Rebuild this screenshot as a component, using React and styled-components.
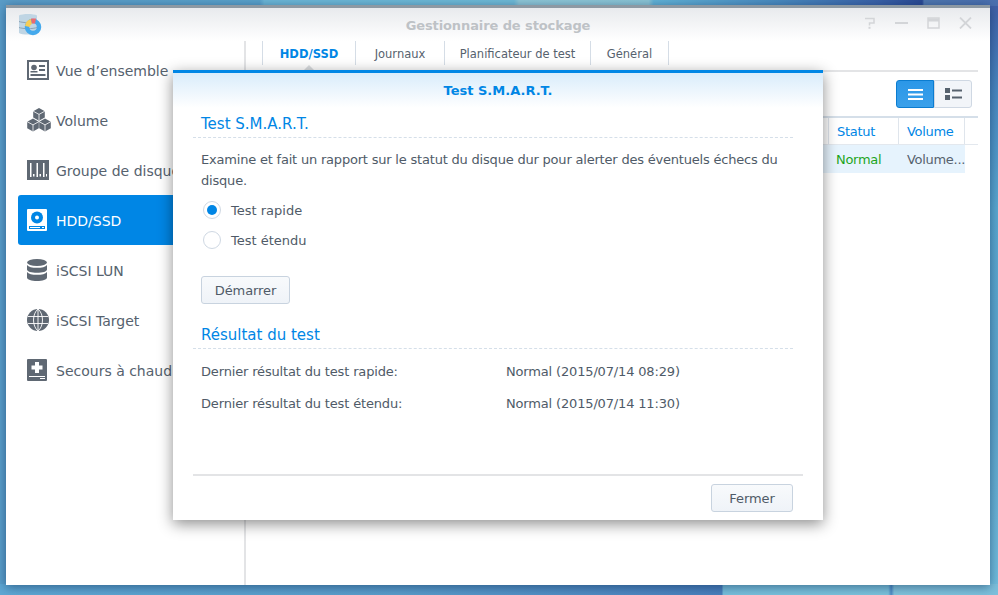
import styled, { createGlobalStyle } from 'styled-components'

const GlobalStyle = createGlobalStyle`
    html, body {
        margin: 0;
        padding: 0;
        overflow: hidden;
    }
    * {
        box-sizing: border-box;
    }
`

const navItems = [
    { label: 'Vue d’ensemble', icon: 'overview' },
    { label: 'Volume', icon: 'volume' },
    { label: 'Groupe de disques', icon: 'group' },
    { label: 'HDD/SSD', icon: 'hdd', active: true },
    { label: 'iSCSI LUN', icon: 'lun' },
    { label: 'iSCSI Target', icon: 'target' },
    { label: 'Secours à chaud', icon: 'spare' },
]

const tabs = [
    { label: 'HDD/SSD', width: 94, active: true },
    { label: 'Journaux', width: 89 },
    { label: 'Planificateur de test', width: 146 },
    { label: 'Général', width: 78 },
]

const NavIcon = ({ name, active }) => {
    const c = active ? '#ffffff' : '#5f6873'
    if (name === 'overview') return (
        <svg width="22" height="20" viewBox="0 0 22 20">
            <rect x="1" y="1" width="20" height="18" fill="#fff" stroke={c} strokeWidth="2" />
            <circle cx="7" cy="7.500" r="2.800" fill={c} />
            <path d="M3.500 12.500h7v-1.500h-7z" fill={c} />
            <path d="M12 5h6v2h-6zM12 9h6v2h-6zM3.500 14h15v2h-15z" fill={c} />
        </svg>
    )
    if (name === 'volume') return (
        <svg width="24" height="24" viewBox="0 0 24 24">
            <path d="M12 0l5.800 3.200v6.300L12 12.700 6.200 9.500V3.200z" fill={c} />
            <path d="M6 10.500l5.800 3.200v6.600L6 23.500.2 20.300v-6.600z" fill={c} />
            <path d="M18 10.500l5.800 3.200v6.600L18 23.500l-5.800-3.200v-6.600z" fill={c} />
            <path d="M6.200 3.200L12 6.400l5.800-3.200M12 6.400v6M.2 13.700L6 16.900l5.800-3.200M6 16.900v6.500M12.200 13.700l5.800 3.200 5.800-3.200M18 16.900v6.500" fill="none" stroke="#fff" strokeWidth=".8" />
        </svg>
    )
    if (name === 'group') return (
        <svg width="22" height="20" viewBox="0 0 22 20">
            <rect width="22" height="20" fill={c} />
            <path d="M3 3h1.500v14H3zM9.500 3H11v14H9.500zM16 3h1.500v14H16z" fill="#fff" />
            <path d="M6 14h1.500v2.500H6zM12.500 14H14v2.500h-1.500zM19 14h1v2.500h-1z" fill="#fff" />
        </svg>
    )
    if (name === 'hdd') return (
        <svg width="20" height="22" viewBox="0 0 20 22">
            <rect width="20" height="22" rx="1" fill="#fff" />
            <circle cx="10" cy="8.500" r="6" fill="#0086e5" />
            <circle cx="10" cy="8.500" r="2" fill="#fff" />
            <path d="M2 17h16v3H2z" fill="#0086e5" />
            <path d="M3 18h10v1H3zM15 18h2v1h-2z" fill="#fff" />
        </svg>
    )
    if (name === 'lun') return (
        <svg width="20" height="22" viewBox="0 0 20 22">
            <ellipse cx="10" cy="3.500" rx="10" ry="3.500" fill={c} />
            <path d="M0 6c1.500 2 5 2.800 10 2.800S18.500 8 20 6v4.500c0 2-4.500 3.300-10 3.300S0 12.500 0 10.500z" fill={c} />
            <path d="M0 13c1.500 2 5 2.800 10 2.800S18.500 15 20 13v5.500c0 2-4.500 3.500-10 3.500S0 20.500 0 18.500z" fill={c} />
        </svg>
    )
    if (name === 'target') return (
        <svg width="22" height="22" viewBox="0 0 22 22">
            <circle cx="11" cy="11" r="11" fill={c} />
            <path d="M1 7.500h20M1 14.500h20M11 0v22M11 0C5 5 5 17 11 22M11 0c6 5 6 17 0 22" fill="none" stroke="#fff" strokeWidth=".9" />
        </svg>
    )
    return (
        <svg width="20" height="22" viewBox="0 0 20 22">
            <rect width="20" height="22" rx="1" fill={c} />
            <path d="M8 3h4v3.500h3.500v4H12V14H8v-3.500H4.500v-4H8z" fill="#fff" />
            <path d="M2 17h16v1H2zM13 19h5v1h-5z" fill="#fff" />
        </svg>
    )
}

const App = () => {
    return (
        <Desktop>
            <GlobalStyle />
            <Window>
                <TitleBar>
                    <AppLogo>
                        <svg width="24" height="23" viewBox="0 0 24 23">
                            <path d="M0 1.500C3 -.5 15 -.5 18 1.500V19c-3 2-15 2-18 0z" fill="#bfd5e4" />
                            <path d="M0 7.500c4 1.500 14 1.500 18 0M0 13.500c4 1.500 14 1.500 18 0" fill="none" stroke="#8ea3b3" strokeWidth="1" />
                            <circle cx="14" cy="13" r="6" fill="none" stroke="#45a9ec" strokeWidth="4.500" />
                            <path d="M6 12a8 8 0 0 1 6-7l1 5a3 3 0 0 0-2 3z" fill="#f7cd55" />
                            <path d="M12 4.500h5l-1 5h-3z" fill="#ee6a70" />
                        </svg>
                    </AppLogo>
                    <WindowTitle>Gestionnaire de stockage</WindowTitle>
                    <WindowControls>
                        <svg width="12" height="12" viewBox="0 0 12 12">
                            <path d="M1 1.500h9v4.500H5.500v2.500" fill="none" stroke="#d3d5d8" strokeWidth="1.500" />
                            <path d="M4.500 9.800h2v2h-2z" fill="#d3d5d8" />
                        </svg>
                        <svg width="13" height="12" viewBox="0 0 13 12">
                            <path d="M0 6h13" stroke="#d3d5d8" strokeWidth="2" />
                        </svg>
                        <svg width="13" height="12" viewBox="0 0 13 12">
                            <path d="M1 1h11v10H1z" fill="none" stroke="#d3d5d8" strokeWidth="1.500" />
                            <path d="M1 3h11" stroke="#d3d5d8" strokeWidth="3" />
                        </svg>
                        <svg width="13" height="12" viewBox="0 0 13 12">
                            <path d="M1 .5l11 11M12 .5l-11 11" stroke="#d3d5d8" strokeWidth="1.800" />
                        </svg>
                    </WindowControls>
                </TitleBar>
                <WindowBody>
                    <Sidebar>
                        {navItems.map((item) => (
                            <NavItem key={item.label} $active={item.active}>
                                <NavIconBox><NavIcon name={item.icon} active={item.active} /></NavIconBox>
                                <NavLabel>{item.label}</NavLabel>
                            </NavItem>
                        ))}
                    </Sidebar>
                    <Content>
                        <TabBar>
                            {tabs.map((tab) => (
                                <Tab key={tab.label} $active={tab.active} $width={tab.width}>{tab.label}</Tab>
                            ))}
                        </TabBar>
                        <Toolbar>
                            <Segment $active>
                                <svg width="15" height="11" viewBox="0 0 15 11">
                                    <path d="M0 0h15v2H0zM0 4.500h15v2H0zM0 9h15v2H0z" fill="#fff" />
                                </svg>
                            </Segment>
                            <Segment>
                                <svg width="17" height="12" viewBox="0 0 17 12">
                                    <path d="M0 0h5v5H0zM0 7h5v5H0zM7 1.500h10v2H7zM7 8.500h10v2H7z" fill="#56626e" />
                                </svg>
                            </Segment>
                        </Toolbar>
                        <Table>
                            <HeadRow>
                                <HeadCell $width={71}>Statut</HeadCell>
                                <HeadCell $width={67}>Volume</HeadCell>
                            </HeadRow>
                            <BodyRow>
                                <BodyCell $width={71} $green>Normal</BodyCell>
                                <BodyCell $width={67}>Volume...</BodyCell>
                            </BodyRow>
                        </Table>
                    </Content>
                </WindowBody>
            </Window>
            <Modal>
                <ModalHeader>Test S.M.A.R.T.</ModalHeader>
                <ModalBody>
                    <SectionTitle>Test S.M.A.R.T.</SectionTitle>
                    <Paragraph>Examine et fait un rapport sur le statut du disque dur pour alerter des éventuels échecs du disque.</Paragraph>
                    <RadioRow>
                        <Radio $checked />
                        <span>Test rapide</span>
                    </RadioRow>
                    <RadioRow>
                        <Radio />
                        <span>Test étendu</span>
                    </RadioRow>
                    <StartButton>Démarrer</StartButton>
                    <SectionTitle>Résultat du test</SectionTitle>
                    <ResultList>
                        <ResultRow>
                            <ResultLabel>Dernier résultat du test rapide:</ResultLabel>
                            <span>Normal (2015/07/14 08:29)</span>
                        </ResultRow>
                        <ResultRow>
                            <ResultLabel>Dernier résultat du test étendu:</ResultLabel>
                            <span>Normal (2015/07/14 11:30)</span>
                        </ResultRow>
                    </ResultList>
                </ModalBody>
                <ModalFooter>
                    <CloseButton>Fermer</CloseButton>
                </ModalFooter>
            </Modal>
        </Desktop>
    )
}

export default App

const Desktop = styled.div`
    position: relative;
    width: 998px;
    height: 595px;
    overflow: hidden;
    font-family: "DejaVu Sans", sans-serif;
    font-size: 13px;
    color: #4f5b68;
    background:
        linear-gradient(90deg, #5a9dc8 0, #5aa3cc 26%, #6db8d8 26.500%, #70bcd8 51.500%, #8fc8d8 52%, #8cc6d6 65%, #62b4d8 65.500%, #4a8bc0 78%, #3a62a8 88%, #2a4a94 92.400%, #5078b0 92.600%, #4a70b0 100%) top / 100% 6px no-repeat,
        linear-gradient(90deg, #5fa8d4 0, #5a9dcb 40%, #4a80bd 72.300%, #78c0dc 72.500%, #7cc3dc 89%, #4e8cc6 89.300%, #82c4dc 89.600%, #7cc0dc 100%) bottom / 100% 11px no-repeat,
        linear-gradient(180deg, #3f5ea6 0, #4a88c0 15%, #5aa8d0 35%, #5fa6cc 70%, #72bedd 100%) right / 8px 100% no-repeat,
        #5a9fcb;
`
const Window = styled.div`
    position: absolute;
    left: 6px;
    top: 5px;
    width: 984px;
    height: 580px;
    display: flex;
    flex-direction: column;
    background: #fff;
    border-top: 3px solid #8d99a3;
    box-shadow: 0 2px 10px rgba(0, 30, 70, 0.5);
`
const TitleBar = styled.div`
    position: relative;
    flex: none;
    height: 33px;
    display: flex;
    align-items: center;
    justify-content: center;
    background: linear-gradient(180deg, #e8eaed 0%, #ffffff 100%);
`
const AppLogo = styled.div`
    position: absolute;
    left: 13px;
    top: 6px;
    line-height: 0;
`
const WindowTitle = styled.div`
    font-weight: bold;
    color: #bec2c6;
    font-size: 13px;
    letter-spacing: -0.1px;
    margin-top: 2px;
`
const WindowControls = styled.div`
    position: absolute;
    right: 18px;
    top: 9px;
    display: flex;
    gap: 19px;
`
const WindowBody = styled.div`
    flex: 1;
    display: flex;
`
const Sidebar = styled.div`
    flex: none;
    width: 240px;
    padding: 4px 0 0 12px;
    border-right: 2px solid #e3e4e6;
`
const NavItem = styled.div`
    height: 50px;
    display: flex;
    align-items: center;
    padding-left: 9px;
    border-radius: 3px 0 0 3px;
    font-size: 14px;
    color: ${props => props.$active ? '#ffffff' : '#56626e'};
    background: ${props => props.$active ? '#0086e5' : 'transparent'};
    white-space: nowrap;
`
const NavIconBox = styled.div`
    width: 29px;
    display: flex;
    justify-content: flex-start;
    line-height: 0;
`
const NavLabel = styled.span`
    margin-top: 2px;
`
const Content = styled.div`
    flex: 1;
    padding: 0 12px 0 16px;
`
const TabBar = styled.div`
    display: flex;
    height: 31px;
    width: 732px;
    margin-left: -16px;
    padding-left: 16px;
    border-bottom: 2px solid #e3e4e6;
`
const Tab = styled.div`
    position: relative;
    width: ${props => props.$width}px;
    height: 24px;
    display: flex;
    align-items: center;
    justify-content: center;
    padding-top: 2px;
    font-size: 11.500px;
    font-weight: ${props => props.$active ? 'bold' : 'normal'};
    color: ${props => props.$active ? '#0086e5' : '#56626e'};
    border-left: ${props => props.$active ? '1px solid #d5dde6' : 'none'};
    border-right: 1px solid #d5dde6;
    &::after {
        content: '';
        display: ${props => props.$active ? 'block' : 'none'};
        position: absolute;
        left: 41px;
        top: 24px;
        border-left: 5px solid transparent;
        border-right: 5px solid transparent;
        border-bottom: 5px solid #d9dcdf;
    }
`
const Toolbar = styled.div`
    display: flex;
    justify-content: flex-end;
    margin-top: 8px;
    padding-right: 6px;
`
const Segment = styled.div`
    width: 38px;
    height: 28px;
    display: flex;
    align-items: center;
    justify-content: center;
    background: ${props => props.$active ? 'linear-gradient(180deg, #2b97e8, #3aa0ea)' : '#f2f5f9'};
    border: 1px solid ${props => props.$active ? '#0b7cd0' : '#cfd8e3'};
    border-radius: ${props => props.$active ? '3px 0 0 3px' : '0 3px 3px 0'};
`
const Table = styled.div`
    margin-top: 8px;
    border-top: 2px solid #d5dfe9;
    letter-spacing: -0.3px;
`
const HeadRow = styled.div`
    display: flex;
    justify-content: flex-end;
    height: 27px;
    padding-right: 14px;
    border-bottom: 1px solid #e3e8ee;
`
const HeadCell = styled.div`
    width: ${props => props.$width}px;
    display: flex;
    align-items: center;
    padding-left: 8px;
    color: #0086e5;
    border-left: 1px solid #dfe5ec;
    border-right: 1px solid #dfe5ec;
    margin-right: -1px;
`
const BodyRow = styled.div`
    display: flex;
    justify-content: flex-end;
    height: 28px;
    margin-right: 13px;
    background: #e6f3fd;
`
const BodyCell = styled.div`
    width: ${props => props.$width}px;
    display: flex;
    align-items: center;
    padding-left: 9px;
    color: ${props => props.$green ? '#1ea51e' : '#56626e'};
`
const Modal = styled.div`
    position: absolute;
    left: 173px;
    top: 70px;
    width: 650px;
    height: 450px;
    display: flex;
    flex-direction: column;
    background: #fff;
    border-top: 3px solid #0086e5;
    box-shadow: 0 4px 14px rgba(0, 0, 0, 0.45);
`
const ModalHeader = styled.div`
    flex: none;
    height: 35px;
    display: flex;
    align-items: center;
    justify-content: center;
    font-weight: bold;
    color: #0086e5;
    background: linear-gradient(180deg, #d9ecfb 0%, #ffffff 100%);
`
const ModalBody = styled.div`
    flex: 1;
    padding: 6px 30px 0 20px;
`
const SectionTitle = styled.div`
    height: 24px;
    padding-left: 8px;
    line-height: 20px;
    font-size: 15px;
    color: #0086e5;
    border-bottom: 1px dashed #d5dfe9;
`
const Paragraph = styled.p`
    margin: 11px 0 4px 8px;
    line-height: 21px;
    letter-spacing: -0.2px;
`
const RadioRow = styled.div`
    display: flex;
    align-items: center;
    gap: 10px;
    height: 30px;
    margin-left: 10px;
`
const Radio = styled.span`
    width: 18px;
    height: 18px;
    display: flex;
    align-items: center;
    justify-content: center;
    border: 1px solid #cfd8e3;
    border-radius: 50%;
    &::after {
        content: '';
        display: ${props => props.$checked ? 'block' : 'none'};
        width: 10px;
        height: 10px;
        border-radius: 50%;
        background: #0086e5;
    }
`
const StartButton = styled.button`
    display: block;
    width: 89px;
    height: 28px;
    margin: 21px 0 21px 8px;
    padding: 0;
    font: inherit;
    letter-spacing: -0.1px;
    color: #4f5b68;
    background: linear-gradient(180deg, #f8fafc, #eff3f8);
    border: 1px solid #c8d3df;
    border-radius: 3px;
`
const ResultList = styled.div`
    margin: 6px 0 0 8px;
    letter-spacing: -0.16px;
`
const ResultRow = styled.div`
    display: flex;
    align-items: center;
    height: 32px;
`
const ResultLabel = styled.div`
    width: 305px;
`
const ModalFooter = styled.div`
    flex: none;
    display: flex;
    justify-content: flex-end;
    height: 46px;
    margin: 0 20px;
    padding: 8px 10px 0 0;
    border-top: 2px solid #e3e4e6;
`
const CloseButton = styled(StartButton)`
    width: 82px;
    margin: 0;
`
